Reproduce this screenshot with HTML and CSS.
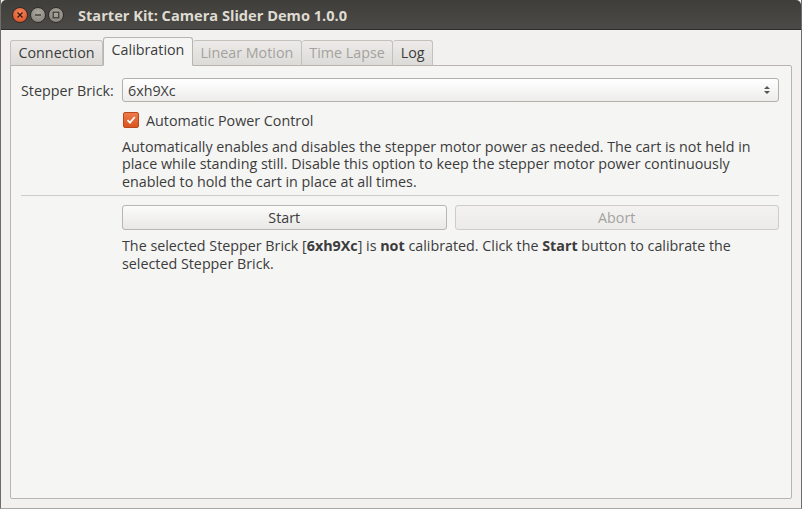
FILE: index.html
```html
<!DOCTYPE html>
<html>
<head>
<meta charset="utf-8">
<link rel="stylesheet" href="styles.css">
</head>
<body>
<div class="window">
  <div class="titlebar">
    <div class="wbtns">
      <span class="wb close"><svg width="8" height="8" viewBox="0 0 8 8"><path d="M1.5 1.5L6.5 6.5M6.5 1.5L1.5 6.5" stroke="#3a1a10" stroke-width="1.4"/></svg></span>
      <span class="wb"><svg width="8" height="8" viewBox="0 0 8 8"><path d="M1 4H7" stroke="#3a3a36" stroke-width="1.4"/></svg></span>
      <span class="wb"><svg width="8" height="8" viewBox="0 0 8 8"><rect x="1.2" y="1.2" width="5.6" height="5.6" fill="none" stroke="#3a3a36" stroke-width="1.2"/></svg></span>
    </div>
    <div class="title">Starter Kit: Camera Slider Demo 1.0.0</div>
  </div>
  <div class="body">
    <div class="tabs">
      <div class="tab">Connection</div>
      <div class="tab active">Calibration</div>
      <div class="tab disabled">Linear Motion</div>
      <div class="tab disabled">Time Lapse</div>
      <div class="tab">Log</div>
    </div>
    <div class="panel">
      <div class="row">
        <div class="label">Stepper Brick:</div>
        <div class="combo"><span>6xh9Xc</span>
          <svg width="8" height="12" viewBox="0 0 8 12"><path d="M1 5L4 2L7 5Z M1 7L4 10L7 7Z" fill="#555"/></svg>
        </div>
      </div>
      <div class="indent">
        <div class="check"><span class="box"><svg width="12" height="12" viewBox="0 0 12 12"><path d="M2.5 6.2L5 8.7L9.8 3" fill="none" stroke="#fff" stroke-width="1.8"/></svg></span>Automatic Power Control</div>
        <p class="desc">Automatically enables and disables the stepper motor power as needed. The cart is not held in place while standing still. Disable this option to keep the stepper motor power continuously enabled to hold the cart in place at all times.</p>
      </div>
      <div class="sep"></div>
      <div class="indent">
        <div class="buttons">
          <div class="btn">Start</div>
          <div class="btn disabled">Abort</div>
        </div>
        <p class="status">The selected Stepper Brick [<b>6xh9Xc</b>] is <b>not</b> calibrated. Click the <b>Start</b> button to calibrate the selected Stepper Brick.</p>
      </div>
    </div>
  </div>
</div>
</body>
</html>
```

FILE: styles.css
```css
html, body {
  margin: 0;
  padding: 0;
  background: #f2f1f0;
}
body {
  width: 802px;
  height: 509px;
  overflow: hidden;
  font-family: "Open Sans", "DejaVu Sans", sans-serif;
  font-size: 14.3px;
  color: #3c3c3c;
}
.window {
  width: 802px;
  height: 509px;
  box-sizing: border-box;
  display: flex;
  flex-direction: column;
  border-left: 1px solid #6f6d69;
  border-right: 1px solid #6f6d69;
  border-bottom: 1px solid #a9a7a3;
}
.titlebar {
  height: 29px;
  flex: none;
  background: linear-gradient(#3f3e3a, #4b4a46);
  display: flex;
  align-items: center;
  border-bottom: 1px solid #2e2d2a;
  border-radius: 5px 5px 0 0;
}
.wbtns {
  display: flex;
  gap: 2px;
  margin-left: 11px;
}
.wb {
  width: 14px;
  height: 14px;
  border-radius: 50%;
  background: radial-gradient(circle at 50% 35%, #aca99f, #7d7b74);
  border: 1px solid #2f2e2b;
  display: flex;
  align-items: center;
  justify-content: center;
}
.wb.close {
  background: radial-gradient(circle at 50% 35%, #f58a5f, #d9461c);
}
.title {
  margin-left: 14px;
  font-weight: bold;
  color: #dfdbd2;
  font-size: 14.6px;
}
.body {
  flex: 1;
  padding: 7px 9px 9px 9px;
  display: flex;
  flex-direction: column;
}
.tabs {
  display: flex;
  align-items: flex-end;
  height: 29px;
  margin-bottom: -1px;
  position: relative;
  z-index: 1;
}
.tab {
  height: 26px;
  box-sizing: border-box;
  padding: 0 7.5px 1px 7.5px;
  display: flex;
  align-items: center;
  border: 1px solid #c4c1bb;
  border-bottom: 1px solid #b8b5b0;
  border-left: none;
  border-radius: 3px 3px 0 0;
  background: linear-gradient(#ecebe9, #dddbd8);
  color: #3c3c3c;
}
.tab:first-child {
  border-left: 1px solid #c4c1bb;
}
.tab.active {
  height: 29px;
  background: #f5f5f4;
  border: 1px solid #b8b5b0;
  border-bottom: 1px solid #f5f5f4;
  padding: 0 7.5px 5px 7.5px;
}
.tab.disabled {
  color: #a4a29e;
}
.panel {
  flex: 1;
  border: 1px solid #b8b5b0;
  border-radius: 0 2px 2px 2px;
  background: #f5f5f4;
  padding: 12px 12px 0 10px;
}
.row {
  display: flex;
  align-items: center;
  height: 24px;
}
.label {
  width: 101px;
}
.combo {
  flex: 1;
  height: 24px;
  box-sizing: border-box;
  border: 1px solid #b3b0aa;
  border-radius: 3px;
  background: linear-gradient(#ffffff, #eeedec);
  display: flex;
  align-items: center;
  justify-content: space-between;
  padding: 0 7px 0 5px;
}
.indent {
  margin-left: 101px;
}
.check {
  display: flex;
  align-items: center;
  margin-top: 6px;
  height: 24px;
}
.box {
  width: 14px;
  height: 14px;
  border-radius: 2px;
  background: linear-gradient(#ee7a4c, #d9561f);
  border: 1px solid #b84a1c;
  display: flex;
  align-items: center;
  justify-content: center;
  margin-left: 1px;
  margin-right: 7px;
}
.desc {
  margin: 6px 0 0 0;
  line-height: 17.3px;
}
.sep {
  height: 1px;
  background: #cfccc7;
  margin: 5px 0 9px 0;
}
.buttons {
  display: flex;
  gap: 8px;
}
.btn {
  flex: 1;
  height: 25px;
  box-sizing: border-box;
  border: 1px solid #b9b6b0;
  border-radius: 3px;
  background: linear-gradient(#fbfbfa, #e9e8e6);
  display: flex;
  align-items: center;
  justify-content: center;
}
.btn.disabled {
  color: #a4a29e;
  background: linear-gradient(#f3f2f1, #ecebea);
  border-color: #cfccc7;
}
.status {
  margin: 7px 0 0 0;
  line-height: 18px;
}
```
